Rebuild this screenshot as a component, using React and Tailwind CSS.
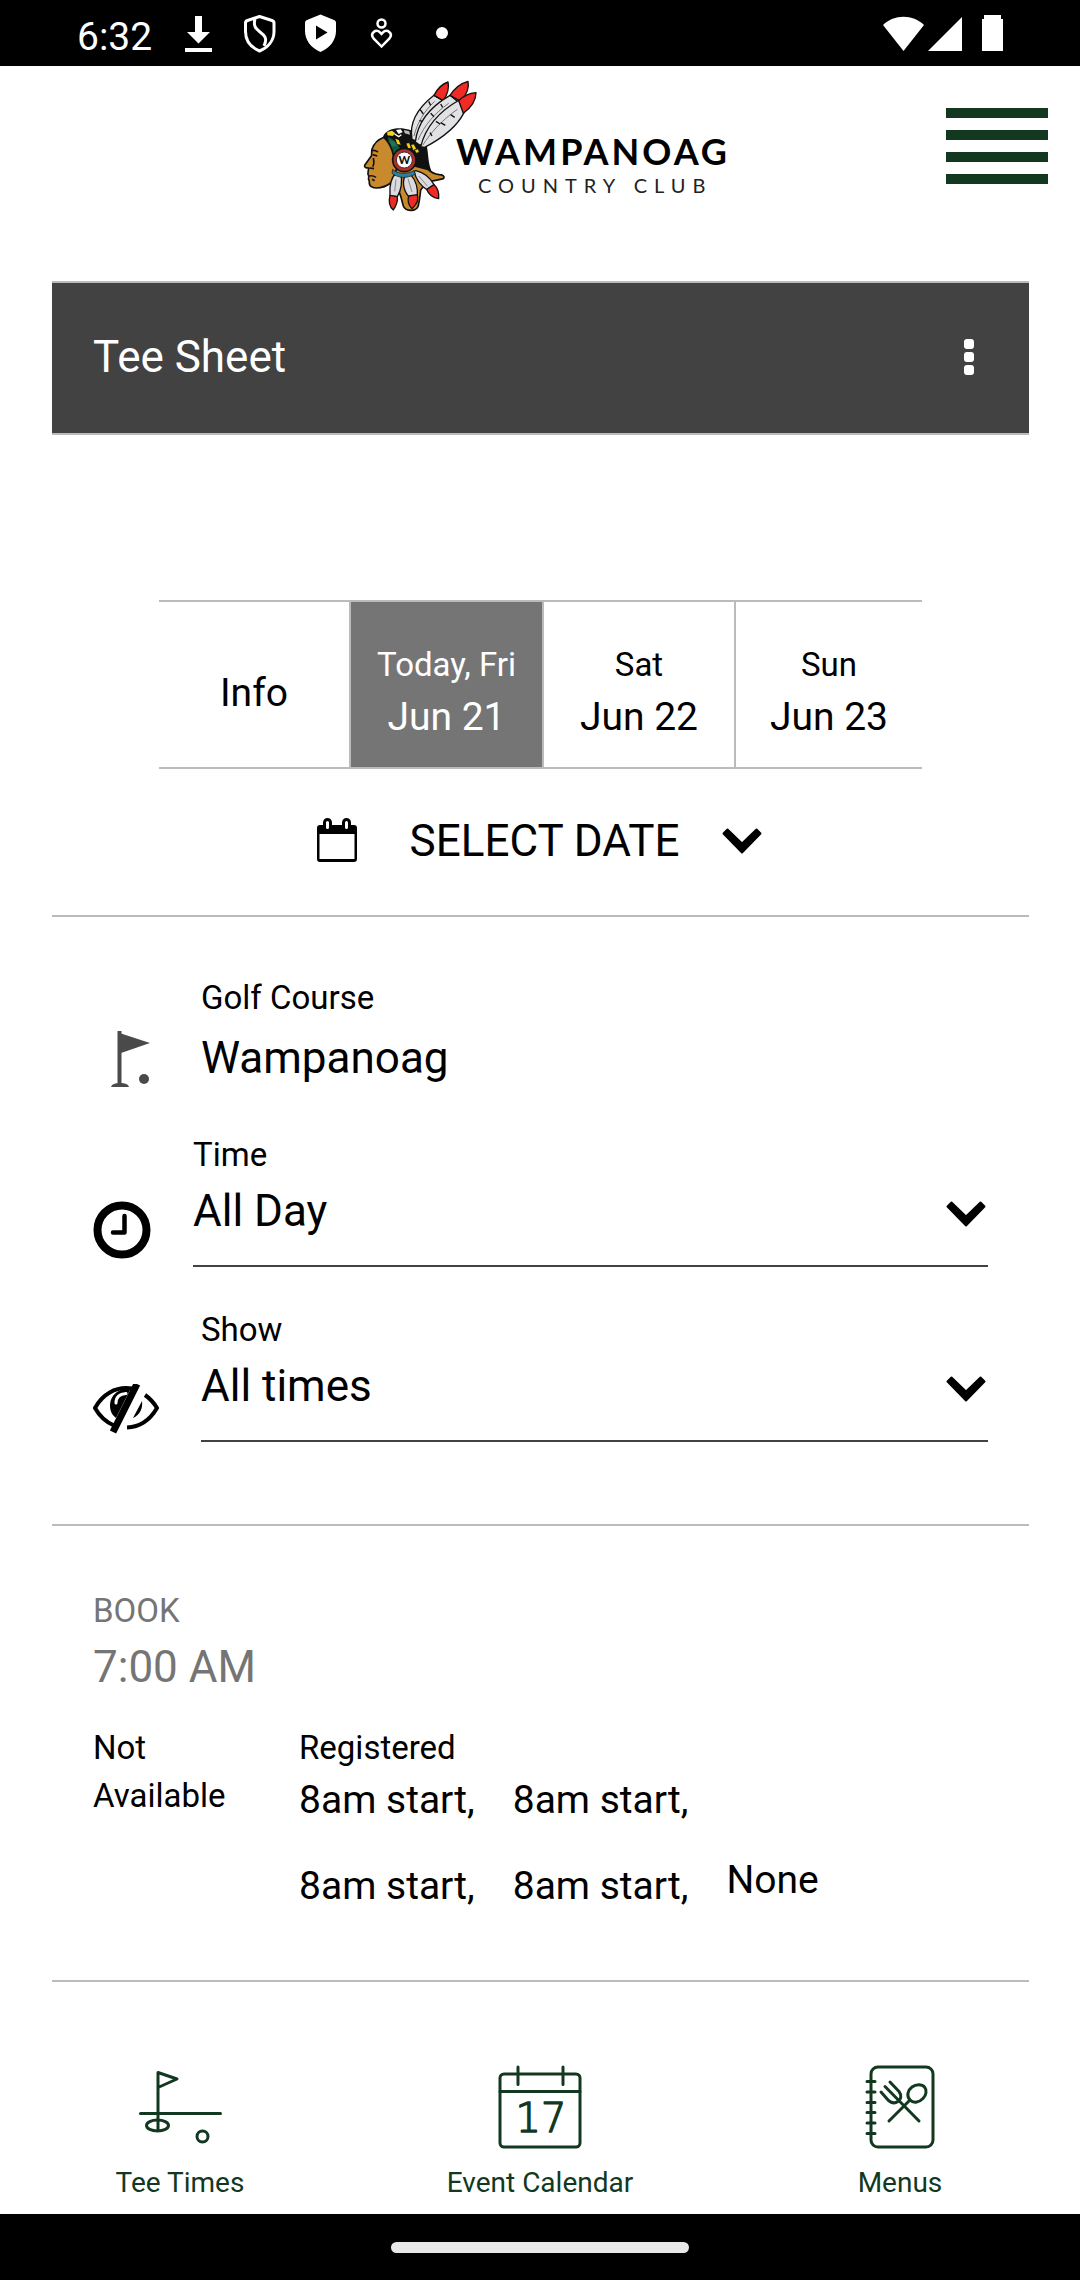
import { useState } from "react"

const days = [
  { id: "fri", day: "Today, Fri", date: "Jun 21" },
  { id: "sat", day: "Sat", date: "Jun 22" },
  { id: "sun", day: "Sun", date: "Jun 23" },
]

const players = ["8am start,", "8am start,", "8am start,", "8am start,"]

function StatusBar() {
  return (
    <div className="flex h-[66px] items-center justify-between bg-black pl-[77px] pr-[77px] text-white">
      <div className="flex items-center">
        <span className="mt-2 w-[107px] text-[39px] leading-none">6:32</span>
        <svg width="268" height="40" viewBox="184 15 268 40" fill="none" aria-hidden="true">
          {/* download */}
          <path d="M195 18h7v16h8l-11.500 11.500L187 34h8z" fill="#fff" />
          <path d="M185 50h27v4h-27z" fill="#fff" />
          {/* shield outline */}
          <path
            d="M259.500 18.500 272 22.500c1.500.500 2 1 2 2.500v8.500c0 9-6 16-14.500 19.500C251 49.500 245.500 42.500 245.500 33.500V25c0-1.500.500-2 2-2.500z"
            stroke="#fff"
            strokeWidth="3"
            strokeLinejoin="round"
          />
          <path d="M255 21c-2 7 1 10 5 13s8 6 4 14" stroke="#fff" strokeWidth="3" />
          {/* play shield */}
          <path
            d="M320.500 16.500 334 22c1.500.600 2 1.500 2 3v8c0 9-6 17-15.500 21C311 50 305 42 305 33v-8c0-1.500.500-2.400 2-3z"
            fill="#fff"
          />
          <path d="M316 27.500v14l11.500-7z" fill="#000" />
          {/* wellbeing */}
          <circle cx="381.500" cy="25.500" r="4" stroke="#fff" strokeWidth="2.500" />
          <path
            d="M381.500 48.500l-8-8.200c-4-5 2.500-10 6.500-6l1.500 1.600 1.500-1.600c4-4 10.500 1 6.500 6z"
            stroke="#fff"
            strokeWidth="2.500"
          />
          <circle cx="442" cy="35" r="6" fill="#fff" />
        </svg>
      </div>
      <svg width="121" height="38" viewBox="882 15 121 38" fill="#fff" aria-hidden="true">
        <path d="M883 26c11-11 30-11 41 0l-20.500 26z" />
        <path d="M962 18v34h-34z" />
        <path d="M982 20h2v-4h17v4h2v32h-21z" />
      </svg>
    </div>
  )
}

function ClubLogo() {
  return (
    <a href="#home" className="ml-3 flex items-start text-black" aria-label="Wampanoag Country Club">
      <svg width="116" height="134" viewBox="40 28 348 402" strokeLinejoin="round" aria-hidden="true">
        {/* hair */}
        <path
          d="M104 196c10-20 36-26 64-22 30 4 60 20 66 50 6 28 4 52 14 76l-50 10-70-10-30-80z"
          fill="#111"
        />
        <path d="M118 200c14 4 26 14 36 34l-14 54-18-50z" fill="#0f5a40" />
        {/* neck */}
        <path
          d="M120 300c20 30 36 70 44 106 6 16 36 18 44 2 4-14 6-30 8-50l20-26c14 0 30-4 48-8 6-6-2-12-12-12-14-2-24-6-34-16l-40-10z"
          fill="#c88a2c"
          stroke="#111"
          strokeWidth="5"
        />
        {/* face */}
        <path
          d="M106 200c-16 6-30 18-36 36-2 8 0 14-2 20l-20 28c-2 6 4 8 12 8l-2 14c-2 6 4 8 2 14-2 4 0 8 2 12-2 14 8 20 20 20 20 0 36-8 48-18l14-40-10-40c-4-22-14-40-28-54z"
          fill="#c88a2c"
          stroke="#111"
          strokeWidth="5"
        />
        <path
          d="M68 240c8-2 14 0 20 4M72 252l14 4M74 262c2 10 4 18-2 26M62 292l14 2M62 316c8-2 14 0 20 4M70 326l8 4"
          fill="none"
          stroke="#111"
          strokeWidth="5"
        />
        {/* head band */}
        <path d="M116 184l14-4 10 8-8 8-16-2z" fill="#f2d21b" />
        <path d="M140 204l10 4 6 14-10-2z" fill="#f2d21b" />
        <path d="M142 178l14-2 6 8-12 6z" fill="#fff" />
        <path d="M166 178l16 4 2 10-16-4z" fill="#bbb" />
        <path d="M122 208l14 4 8 14-14 2z" fill="#23735a" />
        <path d="M138 190l12 8 8-6" fill="none" stroke="#fff" strokeWidth="4" />
        {/* tall feathers */}
        <g stroke="#111" strokeWidth="4">
          <path d="M190 206c-8-44 12-90 66-132l28 16c-4 34-40 74-84 120z" fill="#e2e2e4" />
          <path d="M256 74c10-20 24-34 42-40 4 18-2 38-14 56z" fill="#f02a24" />
          <path d="M200 214c6-56 42-104 104-140l32 26c-12 40-60 84-122 124z" fill="#e2e2e4" />
          <path d="M304 74c14-22 32-36 54-42 4 18-4 40-22 60z" fill="#f02a24" />
          <path d="M216 228c14-56 52-104 116-140l14 38c-22 44-64 76-118 104z" fill="#e2e2e4" />
          <path d="M330 90c14-14 30-22 52-24 0 22-14 44-38 62z" fill="#f02a24" />
        </g>
        <path
          d="M196 196c10-40 30-74 62-104M208 208c20-46 50-80 92-110M222 224c24-38 56-74 104-108"
          fill="none"
          stroke="#777"
          strokeWidth="3"
        />
        <path
          d="M214 116l10 14M240 92l6 12M212 150l10 2M246 128l10 10M276 100l6 10M262 152l12 8M290 164l-14-8M318 140l-12-8M250 196l-6-10"
          stroke="#111"
          strokeWidth="4"
        />
        <path
          d="M172 218l10-2 6 16-10 2zM186 222l10-2 8 16-10 4zM196 238l12-4 4 10-8 4z"
          fill="#f2d21b"
          stroke="#111"
          strokeWidth="2"
        />
        {/* small feathers */}
        <g stroke="#111" strokeWidth="4">
          <path d="M142 308c-14 12-20 40-18 68l22 2c12-20 16-48 10-68z" fill="#dcdce0" />
          <path d="M124 374l22 4c2 14-4 28-12 40-12-10-14-28-10-44z" fill="#f02a24" />
          <path d="M172 312c-12 16-10 44 8 66l26-2c2-24-6-48-20-64z" fill="#dcdce0" />
          <path d="M180 376l26-4c4 16 0 26-16 42-10-10-14-24-10-38z" fill="#f02a24" />
          <path d="M196 302c6 24 18 42 40 56l20-16c-12-22-30-36-54-42z" fill="#dcdce0" />
          <path d="M234 356l22-14c12 10 16 22 14 42-16-2-30-12-36-28z" fill="#f02a24" />
        </g>
        <path d="M142 326l-4 36M178 324l12 40M210 316l26 30" stroke="#888" strokeWidth="3" />
        {/* medallion */}
        <path d="M132 296c14 14 44 16 64 4l4 10c-22 14-50 14-70-2z" fill="#2a7f9e" stroke="#111" strokeWidth="2" />
        <circle cx="167" cy="268" r="35" fill="#a6322c" stroke="#111" strokeWidth="5" />
        <circle cx="167" cy="268" r="24" fill="#fff" stroke="#53202a" strokeWidth="3" />
        <text
          x="167"
          y="280"
          textAnchor="middle"
          fontFamily="Lato, sans-serif"
          fontWeight="900"
          fontSize="33"
          fill="#111"
        >
          W
        </text>
      </svg>
      <div className="-ml-[22px] mt-[49px] font-['Lato',sans-serif]">
        <div className="text-[36px] font-bold leading-[44px] tracking-[3px]">WAMPANOAG</div>
        <div className="pl-[22px] text-[20px] leading-[24px] tracking-[7px] text-[#222]">COUNTRY CLUB</div>
      </div>
    </a>
  )
}

function ChevronDown() {
  return (
    <svg width="42" height="28" viewBox="0 0 42 28" aria-hidden="true">
      <path
        d="M6.500 2.500 21 16.500 35.500 2.500 39.500 6.500 21 25.500 2.500 6.500z"
        fill="currentColor"
        stroke="currentColor"
        strokeWidth="2"
        strokeLinejoin="round"
      />
    </svg>
  )
}

function CalendarIcon() {
  return (
    <svg width="42" height="46" viewBox="0 0 42 46" fill="none" aria-hidden="true">
      <path
        d="M4 7h34a3 3 0 0 1 3 3v31a3 3 0 0 1-3 3H4a3 3 0 0 1-3-3V10a3 3 0 0 1 3-3zM3.500 16v25h35V16z"
        fill="#000"
        fillRule="evenodd"
      />
      <rect x="8.500" y="1.500" width="6" height="11" rx="3" fill="#fff" stroke="#000" strokeWidth="3" />
      <rect x="27.500" y="1.500" width="6" height="11" rx="3" fill="#fff" stroke="#000" strokeWidth="3" />
    </svg>
  )
}

function FlagIcon() {
  return (
    <svg width="66" height="58" viewBox="0 0 66 58" fill="#4a4a4a" aria-hidden="true">
      <path d="M24.500 1h4v52h-4z" />
      <path d="M28 3.500 57 13 28 23z" />
      <path d="M18 57c1-3 4-4 9-4s8 1 9 4z" />
      <circle cx="51" cy="49" r="5" />
    </svg>
  )
}

function ClockIcon() {
  return (
    <svg width="58" height="58" viewBox="0 0 58 58" fill="none" stroke="#000" aria-hidden="true">
      <circle cx="29" cy="29" r="24.500" strokeWidth="8" />
      <path d="M31.500 15v16.500H20" strokeWidth="4.500" strokeLinejoin="round" strokeLinecap="round" />
    </svg>
  )
}

function EyeOffIcon() {
  return (
    <svg width="66" height="50" viewBox="0 1 66 50" fill="none" aria-hidden="true">
      <path d="M39 5.500C22 3 9 12 2 25c5 9 12 14.500 19 17.500" stroke="#000" strokeWidth="4" />
      <path d="M52 12c5 3.500 9 8 12 13-7 12-18 19-30 19.500" stroke="#000" strokeWidth="4" />
      <path d="M38 5C26 5 17 12 17 22c0 6 2 10 6 13z" fill="#000" />
      <path d="M23 20c0-6 4-9 10-9.500" stroke="#fff" strokeWidth="3" strokeLinecap="round" />
      <path d="M49 18c1 7-2 14-9 17z" fill="#000" />
      <path d="M44 1 20 49" stroke="#000" strokeWidth="7" />
      <path d="M50.500 4 28 49" stroke="#fff" strokeWidth="5" />
    </svg>
  )
}

function SelectField({ id, label, icon, options }) {
  return (
    <div className="flex items-end gap-[42px]">
      <div className="mb-2 shrink-0">{icon}</div>
      <div className="flex-1 border-b-2 border-[#424242] pb-[22px]">
        <label htmlFor={id} className="block text-[33px] leading-[48px]">
          {label}
        </label>
        <div className="relative">
          <select id={id} className="block h-16 w-full appearance-none bg-transparent text-[44px] leading-[64px]">
            {options.map((option) => (
              <option key={option}>{option}</option>
            ))}
          </select>
          <div className="pointer-events-none absolute inset-y-0 right-0 flex items-center pr-px pt-[6px]">
            <ChevronDown />
          </div>
        </div>
      </div>
    </div>
  )
}

function TeeTimesIcon() {
  return (
    <svg width="84" height="84" viewBox="0 0 84 84" fill="none" stroke="currentColor" strokeWidth="3" strokeLinecap="round" strokeLinejoin="round" aria-hidden="true">
      <path d="M20 65V7.500l19 6.500-19 8.500" />
      <path d="M2.500 48.500h80" />
      <ellipse cx="19.500" cy="60.500" rx="11" ry="5.500" />
      <circle cx="64.500" cy="71.500" r="5.500" />
    </svg>
  )
}

function EventCalendarIcon() {
  return (
    <svg width="84" height="84" viewBox="0 0 84 84" fill="none" stroke="currentColor" strokeWidth="3" strokeLinecap="round" aria-hidden="true">
      <rect x="2" y="9" width="80" height="73" rx="4" />
      <path d="M2 26.500h80M20 2v17.500M65 2v17.500" />
      <text
        x="43"
        y="67"
        textAnchor="middle"
        fontFamily="'DejaVu Sans', sans-serif"
        fontWeight="200"
        fontSize="40"
        fill="currentColor"
        strokeWidth="1.5"
        strokeLinejoin="round"
      >
        17
      </text>
    </svg>
  )
}

function MenusIcon() {
  return (
    <svg width="84" height="84" viewBox="-1 0 84 84" fill="none" stroke="currentColor" strokeWidth="3" strokeLinecap="round" strokeLinejoin="round" aria-hidden="true">
      <rect x="12" y="2" width="62" height="80" rx="7" />
      <path d="M8 16.500h8M8 27h8M8 37.500h8M8 47.500h8M8 58h8M8 68.500h8" />
      {/* fork */}
      <path d="M31 17l9 9.500c3 4 2 8-1 10s-6 2-9.500-1L22 27M26 21.500 60 56" />
      {/* spoon */}
      <path d="M30 56l21-21" />
      <path d="M51 35c-4-4-2-10 2-13s10-3 12.500 0 2 8-1.500 11.500-9 5.500-13 1.500z" />
    </svg>
  )
}

const navItems = [
  { label: "Tee Times", href: "#tee-times", icon: <TeeTimesIcon /> },
  { label: "Event Calendar", href: "#events", icon: <EventCalendarIcon /> },
  { label: "Menus", href: "#menus", icon: <MenusIcon /> },
]

export default function App() {
  const [selected, setSelected] = useState("fri")

  return (
    <div className="flex min-h-screen flex-col bg-white font-['Roboto',sans-serif] text-black">
      <StatusBar />

      <header className="grid grid-cols-[1fr_auto_1fr] items-start pb-[67px] pt-[14px]">
        <div />
        <ClubLogo />
        <button className="mr-8 mt-7 flex w-[102px] flex-col gap-3 justify-self-end" aria-label="Open menu">
          <span className="h-[10px] w-full bg-[#12381f]" />
          <span className="h-[10px] w-full bg-[#12381f]" />
          <span className="h-[10px] w-full bg-[#12381f]" />
          <span className="h-[10px] w-full bg-[#12381f]" />
        </button>
      </header>

      <main className="pl-[52px] pr-[51px]">
        <div className="flex h-[154px] items-center justify-between border-y-2 border-[#bbb] bg-[#424242] px-[41px] pb-[2px] text-white">
          <h1 className="text-[44px] leading-[64px]">Tee Sheet</h1>
          <button className="mr-[14px] flex flex-col gap-[3px]" aria-label="More options">
            <span className="h-[10px] w-[10px] rounded-[3px] bg-white" />
            <span className="h-[10px] w-[10px] rounded-[3px] bg-white" />
            <span className="h-[10px] w-[10px] rounded-[3px] bg-white" />
          </button>
        </div>

        {/* Day picker */}
        <section className="border-b-2 border-[#bbb] pt-[165px]">
          <div className="mx-auto grid h-[169px] max-w-[763px] grid-cols-[190fr_193fr_192fr_188fr] border-y-2 border-[#bbb]">
            <button className="pt-4 text-[39px] leading-[56px]">Info</button>
            {days.map(({ id, day, date }) => (
              <button
                key={id}
                onClick={() => setSelected(id)}
                className={`border-l-2 border-[#bbb] pt-4 ${selected === id ? "bg-[#757575] text-white" : ""}`}
              >
                <span className="block text-[33px] leading-[48px]">{day}</span>
                <span className="block text-[39px] leading-[56px]">{date}</span>
              </button>
            ))}
          </div>
          <button className="flex h-[146px] w-full items-center justify-center pb-[2px] pr-[2px] text-[44px] leading-[64px]">
            <CalendarIcon />
            <span className="ml-[52px] mr-[42px]">SELECT DATE</span>
            <ChevronDown />
          </button>
        </section>

        {/* Filters */}
        <section className="border-b-2 border-[#bbb] px-[41px] pb-[82px] pt-[57px]">
          <div className="mb-[37px] flex items-end gap-[42px]">
            <div className="mb-[6px] shrink-0">
              <FlagIcon />
            </div>
            <div>
              <div className="text-[33px] leading-[48px]">Golf Course</div>
              <div className="text-[44px] leading-[72px]">Wampanoag</div>
            </div>
          </div>
          <div className="flex flex-col gap-[39px]">
            <SelectField id="time" label="Time" icon={<ClockIcon />} options={["All Day", "Morning", "Afternoon"]} />
            <SelectField id="show" label="Show" icon={<EyeOffIcon />} options={["All times", "Available times"]} />
          </div>
        </section>

        {/* Tee time */}
        <section className="border-b-2 border-[#bbb] px-[41px] pb-[66px] pt-[61px]">
          <div className="text-[#757575]">
            <div className="text-[33px] leading-[48px]">BOOK</div>
            <div className="text-[44px] leading-[64px]">7:00 AM</div>
          </div>
          <div className="mt-[25px] flex">
            <div className="w-[206px] shrink-0 pr-12 text-[33px] leading-[48px]">Not Available</div>
            <div>
              <div className="text-[33px] leading-[48px]">Registered</div>
              <div className="flex items-end gap-[38px] text-[39px] leading-[56px]">
                <ul className="grid grid-cols-2 gap-x-[38px] gap-y-[30px]">
                  {players.map((player, i) => (
                    <li key={i}>{player}</li>
                  ))}
                </ul>
                <span className="pb-[6px]">None</span>
              </div>
            </div>
          </div>
        </section>
      </main>

      <nav className="mt-auto grid grid-cols-3 pb-[11px] text-[#12381f]">
        {navItems.map(({ label, href, icon }) => (
          <a key={label} href={href} className="flex flex-col items-center gap-[14px] text-[28px] leading-[40px]">
            {icon}
            {label}
          </a>
        ))}
      </nav>

      <div className="flex h-[66px] items-center justify-center bg-black">
        <div className="h-[11px] w-[298px] rounded-full bg-[#e8e8e8]" />
      </div>
    </div>
  )
}
